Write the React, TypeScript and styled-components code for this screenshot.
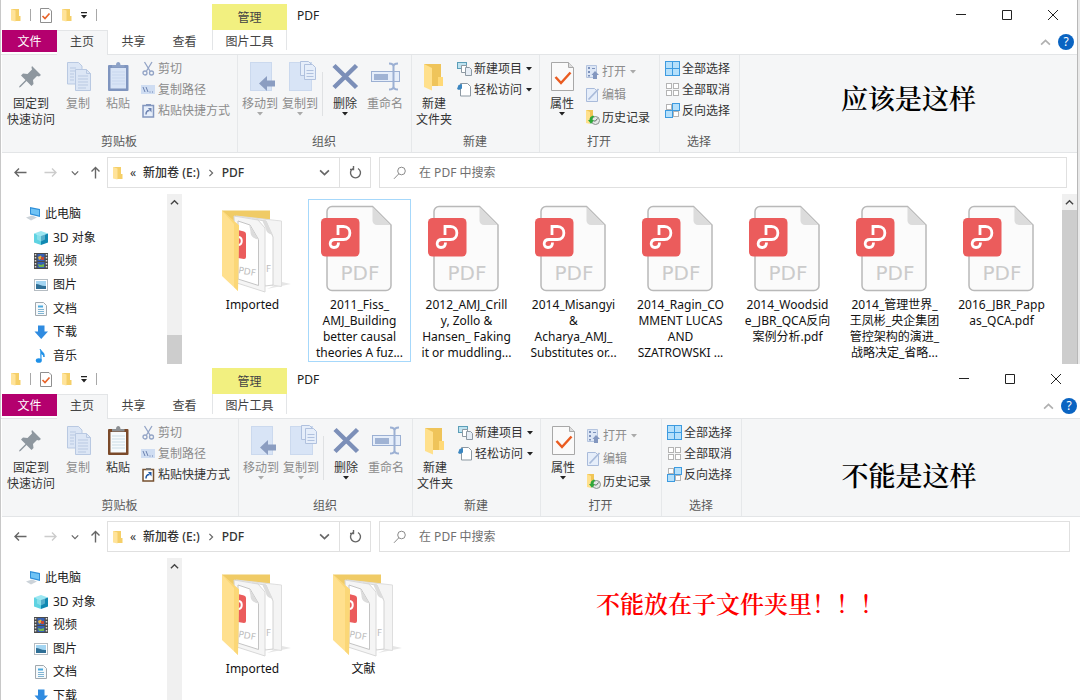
import React from "react";
import styled, { createGlobalStyle } from "styled-components";

const GlobalStyle = createGlobalStyle`
  * { box-sizing: border-box; }
  body {
    margin: 0;
    background: #fff;
    color: #222;
    font: 12px/16px "Noto Sans", "Noto Sans CJK SC", sans-serif;
  }
  button, input { font: inherit; color: inherit; }
  button { background: none; border: 0; padding: 0; cursor: pointer; }
  button:disabled { cursor: default; }
  ul { list-style: none; margin: 0; padding: 0; }
  svg { display: block; flex: none; }
`;

const Page = styled.main`
  display: flex;
  flex-direction: column;
  height: 100vh;
  min-height: 0;
  overflow: hidden;
  background: #e9e9e9;
`;

const Window = styled.section<{ $framed?: boolean }>`
  display: flex;
  flex-direction: column;
  flex: ${(p) => (p.$framed ? "none" : "1 0 auto")};
  margin-right: ${(p) => (p.$framed ? 2 : 0)}px;
  border-left: 1px solid #c8c8c8;
  border-right: ${(p) => (p.$framed ? "1px solid #b8b8b8" : "0")};
  background: #fff;
`;

/* Title bar */
const TitleBar = styled.header`
  display: flex;
  height: 30px;
`;
const QuickAccess = styled.div`
  display: flex;
  align-items: center;
  gap: 9px;
  width: 211px;
  padding-left: 9px;
`;
const Bar = styled.span`
  width: 1px;
  height: 12px;
  background: #a8a8a8;
`;
const IconButton = styled.button`
  display: flex;
  align-items: center;
  justify-content: center;
`;
const ContextTitle = styled.div`
  width: 75px;
  margin-top: 4px;
  padding-top: 6px;
  background: #f2f080;
  color: #444;
  text-align: center;
`;
const WindowTitle = styled.h1`
  flex: 1;
  margin: 0;
  padding: 8px 10px;
  font-size: 12px;
  font-weight: 400;
`;
const WindowButton = styled(IconButton)`
  width: 46px;
  height: 30px;
`;
const WindowButtons = styled.div`
  display: flex;
  padding-right: 1px;
`;

/* Tabs */
const TabBar = styled.nav`
  display: flex;
  align-items: flex-start;
  height: 25px;
  padding-left: 1px;
  border-bottom: 1px solid #e3e5e7;
`;
const Tab = styled.button<{ $kind?: "file" | "active" | "context" }>`
  display: flex;
  justify-content: center;
  width: ${(p) => (p.$kind === "file" ? 55 : p.$kind === "context" ? 75 : 51)}px;
  height: ${(p) => (p.$kind === "active" ? 25 : p.$kind === "context" ? 20 : 22)}px;
  padding-top: ${(p) => (p.$kind === "active" ? 3 : 4)}px;
  border: solid #e3e5e7;
  border-width: ${(p) =>
    p.$kind === "active" ? "1px 1px 0 0" : p.$kind === "context" ? "0 1px" : "0"};
  margin-left: ${(p) => (p.$kind === "context" ? 2 : 0)}px;
  background: ${(p) =>
    p.$kind === "file" ? "#b4006e" : p.$kind === "active" ? "#f5f6f7" : "transparent"};
  color: ${(p) => (p.$kind === "file" ? "#fff" : "#444")};
`;
const TabTools = styled.div`
  display: flex;
  align-items: center;
  gap: 7px;
  height: 24px;
  margin-left: auto;
  padding-right: 3px;
`;
const Help = styled.button`
  width: 16px;
  height: 16px;
  border-radius: 50%;
  background: #0a64c2;
  color: #fff;
  line-height: 16px;
`;

/* Ribbon */
const Ribbon = styled.div`
  display: flex;
  margin-left: 1px;
  border-bottom: 1px solid #e3e5e7;
  background: #f5f6f7;
`;
const Group = styled.section<{ $width: number }>`
  display: flex;
  flex-direction: column;
  flex: none;
  width: ${(p) => p.$width}px;
  height: 97px;
  padding: 3px 3px 2px 2px;
  border-right: 1px solid #e6e8ea;
`;
const GroupBody = styled.div`
  display: flex;
  flex: 1;
`;
const GroupName = styled.h2`
  margin: 0;
  color: #5a5a5a;
  font-size: 12px;
  font-weight: 400;
  text-align: center;
`;
const BigButton = styled.button<{ $wide?: boolean }>`
  display: flex;
  flex-direction: column;
  align-items: center;
  flex: none;
  width: ${(p) => (p.$wide ? 54 : 40)}px;
  height: 72px;
  padding-top: 2px;
  color: #333;
  white-space: nowrap;
  &:disabled { color: #8c8c8c; }
  > svg:first-child { margin-bottom: 4px; }
`;
const Divider = styled.span`
  width: 1px;
  height: 44px;
  margin: 14px 2px 0;
  background: #dfe1e3;
`;
const Stack = styled.div<{ $loose?: boolean }>`
  display: grid;
  grid-auto-rows: ${(p) => (p.$loose ? 23 : 21)}px;
  align-content: start;
  padding-top: ${(p) => (p.$loose ? 2 : 0)}px;
  padding-left: 3px;
`;
const SmallButton = styled.button`
  display: flex;
  align-items: center;
  gap: 2px;
  color: #333;
  white-space: nowrap;
  &:disabled { color: #8c8c8c; }
`;
const CaretSlot = styled.span`
  padding-left: 2px;
`;
const Note = styled.p<{ $low?: boolean }>`
  flex: 1;
  margin: 0;
  padding-top: ${(p) => (p.$low ? 42 : 29)}px;
  padding-right: ${(p) => (p.$low ? 4 : 0)}px;
  color: #000;
  font: 600 27px/32px "Liberation Serif", "Noto Serif CJK SC", "Noto Sans CJK SC", serif;
  text-align: center;
`;

/* Address row */
const AddressRow = styled.div`
  display: flex;
  align-items: center;
  padding: 4px 10px 6px 4px;
`;
const NavButtons = styled.div`
  display: flex;
  margin-right: 2px;
`;
const NavButton = styled(IconButton)<{ $narrow?: boolean }>`
  width: ${(p) => (p.$narrow ? 20 : 30)}px;
  height: 30px;
`;
const Box = styled.div`
  display: flex;
  align-items: center;
  height: 31px;
  border: 1px solid #e0e0e0;
`;
const AddressBox = styled(Box)`
  width: 264px;
  margin-right: 8px;
  padding-left: 4px;
  color: #333;
`;
const Crumbs = styled.div`
  display: flex;
  align-items: center;
  flex: 1;
  gap: 7px;
`;
const Crumb = styled.a`
  color: inherit;
  text-decoration: none;
  font-weight: 500;
`;
const Refresh = styled(IconButton)`
  width: 31px;
  height: 29px;
  margin-left: 9px;
  border-left: 1px solid #e0e0e0;
`;
const SearchBox = styled(Box)`
  flex: 1;
  gap: 12px;
  padding-left: 13px;
`;
const SearchInput = styled.input`
  flex: 1;
  min-width: 0;
  border: 0;
  padding: 0;
  outline: 0;
  background: none;
  &::placeholder { color: #6f6f6f; opacity: 1; }
`;

/* Body */
const Body = styled.div`
  display: flex;
  flex: 1;
`;
const Tree = styled.ul<{ $short: boolean }>`
  display: flex;
  flex-direction: column;
  justify-content: space-between;
  width: 166px;
  height: ${(p) => (p.$short ? 146 : 170)}px;
  padding-top: 12px;
`;
const TreeItem = styled.li<{ $root?: boolean }>`
  display: flex;
  align-items: center;
  gap: 4px;
  height: 16px;
  padding-left: ${(p) => (p.$root ? 24 : 32)}px;
`;
const Track = styled.div`
  display: flex;
  flex-direction: column;
  align-items: center;
  width: 15px;
  background: #f0f0f0;
`;
const TrackArrow = styled(IconButton)`
  width: 15px;
  height: 16px;
`;
const Thumb = styled.div<{ $short?: boolean }>`
  width: 15px;
  flex: ${(p) => (p.$short ? "0 0 29px" : "1")};
  margin-top: ${(p) => (p.$short ? "auto" : 0)};
  background: #cdcdcd;
`;
const Files = styled.ul<{ $gap: number }>`
  display: flex;
  flex: 1;
  align-items: flex-start;
  gap: ${(p) => p.$gap}px;
  padding: 5px 0 2px 19px;
`;
const File = styled.li<{ $selected?: boolean }>`
  display: flex;
  flex-direction: column;
  align-items: center;
  flex: none;
  width: 103px;
  padding: 5px 0 0;
  border: 1px solid ${(p) => (p.$selected ? "#a6d8fb" : "transparent")};
  color: #111;
  text-align: center;
  white-space: nowrap;
  > svg { margin-bottom: 4px; }
`;
const Line = styled.span`
  display: block;
`;
const Warning = styled.p`
  margin: 26px 0 0 173px;
  color: #f00;
  font: 600 24px/32px "Liberation Serif", "Noto Serif CJK SC", "Noto Sans CJK SC", serif;
`;

/* Drawings */
const Caret = ({ dim }: { dim?: boolean }) => (
  <svg width="6" height="4" viewBox="0 0 6 4" fill={dim ? "#aaa" : "#222"}>
    <path d="M0 0h6L3 3.5z" />
  </svg>
);
const FolderSmall = () => (
  <svg width="11" height="14" viewBox="0 0 11 14">
    <path d="M1 1h8v7h1.500v5H5z" fill="#f5cf68" />
    <path d="M1 1l4.500 1.500V13.500L1 12.500z" fill="#ffe39a" />
  </svg>
);
const CheckDoc = () => (
  <svg width="12" height="15" viewBox="0 0 12 15" fill="none">
    <path d="M.5.5h8.500l2.500 2.500v11.500H.5z" fill="#fff" stroke="#8f8f8f" />
    <path d="M2.500 8l2.500 2.500 4.500-5" stroke="#e8642a" strokeWidth="1.700" />
  </svg>
);
const Customize = () => (
  <svg width="6" height="7" viewBox="0 0 6 7" fill="#222">
    <path d="M0 0h6v1.200H0zM0 3h6L3 6.500z" />
  </svg>
);
const Chevron = ({ dir, color = "#666", size = 9 }: { dir: "up" | "down" | "right"; color?: string; size?: number }) => (
  <svg width={size} height={size} viewBox="0 0 10 10" fill="none" stroke={color} strokeWidth="1.500">
    <path d={dir === "up" ? "M1 7l4-4 4 4" : dir === "down" ? "M1 3l4 4 4-4" : "M3 1l4 4-4 4"} />
  </svg>
);
const Arrow = ({ dir, color = "#666" }: { dir: "left" | "right" | "up"; color?: string }) => (
  <svg width="13" height="13" viewBox="0 0 13 13" fill="none" stroke={color} strokeWidth="1.400">
    <path
      d={
        dir === "left"
          ? "M12.500 6.500H1M5 2.500l-4 4 4 4"
          : dir === "right"
            ? "M.5 6.500H12M8 2.500l4 4-4 4"
            : "M6.500 12.500V1.500M2.500 5.500l4-4 4 4"
      }
    />
  </svg>
);
const Pin = () => (
  <svg width="32" height="32" viewBox="0 0 32 32">
    <path d="M17 6l9 9-2 1.500-2-.5-4 4 .5 4-2 2-5-5-6 6-1.500.5.5-1.500 6-6-4.500-4.500 2-2 4.500.5 4.500-4.500-.5-2z" fill="#8e979f" />
  </svg>
);
const CopyPages = () => (
  <svg width="32" height="32" viewBox="0 0 32 32" fill="#dce6f5" stroke="#b9c9e2">
    <path d="M5.500 2.500h11l3.500 3.500v18H5.500z" />
    <path d="M13.500 9.500h11l4 4v17h-15z" />
    <path d="M24.500 9.500v4h4M8 8h6M8 11h5M8 14h4M8 17h4M8 20h4M16 16h10M16 19h10M16 22h10M16 25h10M16 28h8" fill="none" />
  </svg>
);
const Clipboard = ({ on }: { on?: boolean }) => (
  <svg width="32" height="32" viewBox="0 0 32 32">
    <rect x="6" y="5" width="20.500" height="26" rx="1" fill={on ? "#7b4a2a" : "#7f95bf"} />
    <rect x="8.500" y="8" width="15.500" height="20.500" fill={on ? "#f6fafc" : "#d8e4f6"} />
    <path d="M10 12h13M10 15h13M10 18h13M10 21h13M10 24h13" stroke={on ? "#ccdde6" : "#c8d7ee"} />
    <path d="M10 7.500V5h4c0-4 4.500-4 4.500 0h4v2.500z" fill={on ? "#8c8f92" : "#8da2c7"} />
  </svg>
);
const MoveTo = () => (
  <svg width="32" height="32" viewBox="0 0 32 32">
    <rect x="6.500" y="2.500" width="21" height="28" fill="#d8e4f6" stroke="#cbd9ee" />
    <path d="M15 23.500L23 16v4.500h8v6h-8V31z" fill="#8b9dc1" />
  </svg>
);
const CopyTo = () => (
  <svg width="32" height="32" viewBox="0 0 32 32" stroke="#b0c1de">
    <rect x="5.500" y="2.500" width="22" height="28" fill="#d8e4f6" stroke="#cbd9ee" />
    <path d="M16.500 1.500h8l3 3v11h-11z" fill="#e6eefa" />
    <path d="M20.500 4.500h8l3 3v12h-11z" fill="#e6eefa" />
    <path d="M22.500 10.500h7M22.500 13.500h7M22.500 16.500h7" />
  </svg>
);
const Delete = () => (
  <svg width="32" height="32" viewBox="0 0 32 32">
    <path d="M5 5.500l22.500 22M27.500 5.500L5 27.500" stroke="#7c8fb8" strokeWidth="4.500" />
  </svg>
);
const Rename = () => (
  <svg width="32" height="32" viewBox="0 0 32 32" fill="none" stroke="#9cb0d3">
    <rect x="2.500" y="11.500" width="28" height="10" fill="#e6eefa" />
    <rect x="5" y="14" width="14" height="6" fill="#a0b3d4" stroke="none" />
    <path d="M20 3.500q4.500 0 4.500 3v20q0 3-4.500 3M29 3.500q-4.500 0-4.500 3v20q0 3 4.500 3" strokeWidth="2" />
  </svg>
);
const NewFolder = () => (
  <svg width="32" height="32" viewBox="0 0 32 32">
    <path d="M6 4h17v14h1.500v8H12z" fill="#efc45a" />
    <path d="M20 17h5v9h-5z" fill="#ffd977" />
    <path d="M6 4l8 4v22.500L6 27z" fill="#ffe08c" />
  </svg>
);
const Properties = () => (
  <svg width="32" height="32" viewBox="0 0 32 32" fill="none">
    <path d="M5.500 2.500h17l5 5v23h-22z" fill="#fafafa" stroke="#a8a8a8" />
    <path d="M22.500 2.500v5h5" fill="#ddd" stroke="#a8a8a8" />
    <path d="M9.500 17l5.500 6L24.500 12.500" stroke="#ea5c21" strokeWidth="2.500" />
  </svg>
);

const small = { width: 15, height: 15, viewBox: "0 0 15 15" };
const Cut = () => (
  <svg {...small} fill="none" stroke="#93a4c6" strokeWidth="1.300">
    <path d="M3.500 1l5.500 9M11 1L5.500 10" />
    <circle cx="4" cy="12" r="2" />
    <circle cx="10.500" cy="12" r="2" />
  </svg>
);
const CopyPath = () => (
  <svg {...small}>
    <rect x="0" y="3" width="14" height="9" fill="#cfddf2" />
    <path d="M2 5l2 5M5 5l2 5M8.500 10h1M11 10h1" stroke="#6c82b0" />
  </svg>
);
const Shortcut = ({ on }: { on?: boolean }) => (
  <svg {...small} fill="none">
    <path d="M2 2.500h10.500v11.500H2z" fill={on ? "#fff" : "#e6eefa"} stroke={on ? "#76502f" : "#8397bf"} strokeWidth="1.500" />
    <path d="M5 1h5v2H5z" fill={on ? "#777" : "#8397bf"} />
    <path d="M5 11.500c0-3 1-4 3.500-4" stroke={on ? "#1d56a5" : "#6c82b0"} strokeWidth="1.500" />
    <path d="M7 5h3.500v4.500z" fill={on ? "#1d56a5" : "#6c82b0"} />
  </svg>
);
const NewItem = () => (
  <svg {...small} stroke="#8d99a3">
    <rect x=".5" y="1.500" width="9" height="6" fill="#bfe3f0" stroke="#5b9eb8" />
    <path d="M4.500 4.500h5v7h-5z" fill="#fff" />
    <path d="M8.500 6.500h4l2 2v6h-6z" fill="#e6edf5" />
  </svg>
);
const EasyAccess = () => (
  <svg {...small}>
    <path d="M3.500 1.500h7l3 3v9.500h-10z" fill="#fff" stroke="#8d99a3" />
    <path d="M0 7l1.500-4L5 2v4.500L2 8z" fill="#3b86c0" />
  </svg>
);
const Open = () => (
  <svg {...small}>
    <path d="M1.500 1.500h10v12h-10z" fill="#dce6f5" stroke="#b4c4df" />
    <path d="M3 3h2v2H3zM3 7h2v2H3zM3 11h2v1.500H3zM7 4h3v1H7z" fill="#7d92bb" />
    <path d="M10 7l4 4h-2v4H8v-4H6.500z" fill="#8397bf" />
  </svg>
);
const Edit = () => (
  <svg {...small} fill="none" stroke="#a9bbda">
    <path d="M1.500 1.500h8l3 3v10h-11z" fill="#e6eefa" />
    <path d="M3.500 12.500L13.500 2" strokeWidth="1.800" />
  </svg>
);
const History = () => (
  <svg {...small}>
    <path d="M1 0h7v12H4l-3 1z" fill="#f0c555" />
    <path d="M1 0l4 2v12l-4-1z" fill="#ffe08c" />
    <circle cx="10.500" cy="10.500" r="4" fill="#e4e8e6" stroke="#87918c" />
    <path d="M10.500 11l2-2.500M8.500 11h2" fill="none" stroke="#5c6a63" />
    <path d="M8 5.500c-3 1-3.500 3-3.500 4.500H3l3 4 3-4H7.500c0-2 .5-3 2-3.500z" fill="#2fa83a" />
  </svg>
);
const SelectGrid = ({ filled }: { filled: boolean[] }) => (
  <svg {...small}>
    {filled.map((on, i) => (
      <rect
        key={i}
        x={(i % 2) * 7 + (on ? 0.5 : 1.5)}
        y={Math.floor(i / 2) * 7 + (on ? 0.5 : 1.5)}
        width={on ? 7 : 5}
        height={on ? 7 : 5}
        fill={on ? "#b5e0fb" : "#fff"}
        stroke={on ? "#3d9be0" : "#b4b4b4"}
      />
    ))}
  </svg>
);
const RefreshIcon = () => (
  <svg width="13" height="13" viewBox="0 0 13 13" fill="none" stroke="#666" strokeWidth="1.400">
    <path d="M9 2.500a5 5 0 1 1-5 0M4.500 0v3.500H1" />
  </svg>
);
const SearchIcon = () => (
  <svg width="14" height="14" viewBox="0 0 14 14" fill="none" stroke="#8a8a8a">
    <circle cx="8.500" cy="5" r="3.800" />
    <path d="M5.800 7.800L1 12.800" />
  </svg>
);

const tree = { width: 16, height: 16, viewBox: "0 0 16 16" };
const treeItems = [
  {
    name: "此电脑",
    icon: (
      <svg {...tree}>
        <path d="M5 1l10 2v8L5 8.500z" fill="#2f8fd8" />
        <path d="M6 2.500l8 1.500v5.500L6 7.500z" fill="#6fc3f5" />
        <path d="M1 11.500l6-2 5 2-6 3z" fill="#ccd3d9" />
      </svg>
    ),
  },
  {
    name: "3D 对象",
    icon: (
      <svg {...tree}>
        <path d="M8 1l7 2.500-7 2.500-7-2.500z" fill="#9be7f2" />
        <path d="M1 3.500L8 6v9l-7-2.500z" fill="#5fd3e2" />
        <path d="M15 3.500L8 6v9l7-2.500z" fill="#1189b2" />
        <path d="M4 4.500l4 1.500 4-1.500v5l-4 2-4-2z" fill="#d3f6fa" opacity=".35" />
      </svg>
    ),
  },
  {
    name: "视频",
    icon: (
      <svg {...tree}>
        <rect x="1" y="0" width="14" height="16" fill="#4a4a4a" />
        <path d="M2.500 1v14M13.500 1v14" stroke="#ddd" strokeDasharray="1.500 1.500" strokeWidth="1.500" />
        <rect x="4.500" y="1" width="7" height="7" fill="#3560b5" />
        <rect x="4.500" y="9" width="7" height="6" fill="#3560b5" />
        <path d="M5 4l3-1.500L9 5l-3 2z" fill="#e5b13a" />
        <path d="M8 4h3v3H8z" fill="#c44a35" />
        <path d="M5 11l3 1 3-1v3H6z" fill="#75b64a" />
      </svg>
    ),
  },
  {
    name: "图片",
    icon: (
      <svg {...tree}>
        <rect x="1.500" y="2.500" width="13" height="11" fill="#fff" stroke="#b5bcc2" />
        <rect x="3" y="4" width="10" height="8" fill="#a3d5f2" />
        <path d="M3 7c3 0 6 2.500 10 2v3H3z" fill="#2f6f96" />
      </svg>
    ),
  },
  {
    name: "文档",
    icon: (
      <svg {...tree}>
        <path d="M2.500 1.500h8l3 3v10h-11z" fill="#f6f9fb" stroke="#a0a8ae" />
        <path d="M5 4.500h5v2H5z" fill="#4aa9de" />
        <path d="M5 8.500h6M5 10.500h6M5 12.500h6" stroke="#7fb4d3" />
      </svg>
    ),
  },
  {
    name: "下载",
    icon: (
      <svg {...tree}>
        <path d="M5 1.500h6.500v6H15L8.200 15 1.500 7.500H5z" fill="#2f8be0" />
      </svg>
    ),
  },
  {
    name: "音乐",
    icon: (
      <svg {...tree}>
        <path d="M7 1c1 3 5 3 4 8-.5-2-1.500-3-3-3.500V12" fill="#1e90e8" stroke="#1e90e8" />
        <ellipse cx="5.800" cy="12.500" rx="3" ry="2.300" fill="#1e90e8" />
      </svg>
    ),
  },
];

const PdfIcon = () => (
  <svg width="80" height="88" viewBox="1 0 80 88" fill="none">
    <path d="M13 1.500h40.500L72 20v60.500a5 5 0 0 1-5 5H13a5 5 0 0 1-5-5v-74a5 5 0 0 1 5-5z" fill="#fbfbfb" stroke="#b9b9b9" strokeWidth="1.500" />
    <path d="M53.500 2L71.500 20H58a4.500 4.500 0 0 1-4.500-4.500z" fill="#dcdcdc" />
    <rect x="2" y="13" width="38.500" height="38.500" rx="4.500" fill="#eb5c5c" />
    <path d="M19 30V21.500H24.500C33 21.500 33 34.500 24.500 34.500H16C10 34.500 9.500 42.500 15 42.500C19 42.500 19.500 40 19.500 37.500" stroke="#fff" strokeWidth="2.800" />
    <text x="41" y="75" fill="#cbcbcb" fontFamily="DejaVu Sans, sans-serif" fontSize="20" textAnchor="middle">PDF</text>
  </svg>
);
const FolderIcon = () => (
  <svg width="80" height="88" viewBox="1 0 80 88">
    <path d="M55 84l24-5-9-2z" fill="#e6e6e6" />
    <path d="M10 5.500h48V40H10z" fill="#f0cb66" />
    <path d="M24 11l45.500 5v65.500L53 79z" fill="#f4f4f4" stroke="#dedede" />
    <path d="M40 14l14 2 7 16v48l-8 1z" fill="#fff" stroke="#d2d2d2" />
    <path d="M50 15l4 1 7 14c-4-1-7-3-7-6z" fill="#dcdcdc" />
    <path d="M22 11l24 4 7 8v64L25 78z" fill="#f5f5f5" stroke="#d8d8d8" />
    <path d="M26 16l12 4 8.500 14.500v46L26 74z" fill="#fff" stroke="#c4c4c4" />
    <path d="M37 19l9.500 15.500c-5-1-8-3-8-8z" fill="#dcdcdc" />
    <path d="M26 25l6 1.500q2 .5 2 2.500v23q0 2-2 2l-6-1z" fill="#eb5c5c" />
    <path d="M26 32c5 0 5 8 0 8" fill="none" stroke="#fff" strokeWidth="2" />
    <text x="26" y="68" fill="#bdbdbd" fontFamily="DejaVu Sans, sans-serif" fontSize="9" transform="rotate(10 26 68)">PDF</text>
    <text x="54" y="67" fill="#bdbdbd" fontFamily="DejaVu Sans, sans-serif" fontSize="9">F</text>
    <path d="M10 5.500l17 15L26 86 10 71z" fill="#ffe08e" />
    <path d="M10 5.500l17 15L26 86l-4-4V19z" fill="#fbd777" />
  </svg>
);

type FileEntry = { lines: string[]; folder?: boolean; selected?: boolean };
type ExplorerProps = {
  files: FileEntry[];
  places: typeof treeItems;
  groupWidths: number[];
  note: string;
  warning?: string;
  framed?: boolean;
  canPaste?: boolean;
  fileGap: number;
  scrollable?: boolean;
};

const Explorer = ({ files, places, groupWidths, note, warning, framed, canPaste, fileGap, scrollable }: ExplorerProps) => (
  <Window $framed={framed}>
    <TitleBar>
      <QuickAccess>
        <FolderSmall />
        <Bar />
        <IconButton aria-label="属性"><CheckDoc /></IconButton>
        <IconButton aria-label="新建文件夹"><FolderSmall /></IconButton>
        <IconButton aria-label="自定义快速访问工具栏"><Customize /></IconButton>
        <Bar />
      </QuickAccess>
      <ContextTitle>管理</ContextTitle>
      <WindowTitle>PDF</WindowTitle>
      <WindowButtons>
        <WindowButton aria-label="最小化">
          <svg width="10" height="10" stroke="#222"><path d="M0 4.500h10" /></svg>
        </WindowButton>
        <WindowButton aria-label="最大化">
          <svg width="10" height="10" fill="none" stroke="#222"><path d="M.5.5h9v9h-9z" /></svg>
        </WindowButton>
        <WindowButton aria-label="关闭">
          <svg width="10" height="10" stroke="#222"><path d="M0 0l10 10M10 0L0 10" /></svg>
        </WindowButton>
      </WindowButtons>
    </TitleBar>
    <TabBar>
      <Tab $kind="file">文件</Tab>
      <Tab $kind="active">主页</Tab>
      <Tab>共享</Tab>
      <Tab>查看</Tab>
      <Tab $kind="context">图片工具</Tab>
      <TabTools>
        <IconButton aria-label="折叠功能区"><Chevron dir="up" color="#b0b0b0" size={11} /></IconButton>
        <Help aria-label="帮助">?</Help>
      </TabTools>
    </TabBar>
    <Ribbon>
      <Group $width={groupWidths[0]}>
        <GroupBody>
          <BigButton $wide><Pin />固定到<Line>快速访问</Line></BigButton>
          <BigButton disabled><CopyPages />复制</BigButton>
          <BigButton disabled={!canPaste}><Clipboard on={canPaste} />粘贴</BigButton>
          <Stack>
            <SmallButton disabled><Cut />剪切</SmallButton>
            <SmallButton disabled><CopyPath />复制路径</SmallButton>
            <SmallButton disabled={!canPaste}><Shortcut on={canPaste} />粘贴快捷方式</SmallButton>
          </Stack>
        </GroupBody>
        <GroupName>剪贴板</GroupName>
      </Group>
      <Group $width={groupWidths[1]}>
        <GroupBody>
          <BigButton disabled><MoveTo />移动到<Caret dim /></BigButton>
          <BigButton disabled><CopyTo />复制到<Caret dim /></BigButton>
          <Divider />
          <BigButton><Delete />删除<Caret /></BigButton>
          <BigButton disabled><Rename />重命名</BigButton>
        </GroupBody>
        <GroupName>组织</GroupName>
      </Group>
      <Group $width={groupWidths[2]}>
        <GroupBody>
          <BigButton><NewFolder />新建<Line>文件夹</Line></BigButton>
          <Stack>
            <SmallButton><NewItem />新建项目<CaretSlot><Caret /></CaretSlot></SmallButton>
            <SmallButton><EasyAccess />轻松访问<CaretSlot><Caret /></CaretSlot></SmallButton>
          </Stack>
        </GroupBody>
        <GroupName>新建</GroupName>
      </Group>
      <Group $width={groupWidths[3]}>
        <GroupBody>
          <BigButton><Properties />属性<Caret /></BigButton>
          <Stack $loose>
            <SmallButton disabled><Open />打开<CaretSlot><Caret dim /></CaretSlot></SmallButton>
            <SmallButton disabled><Edit />编辑</SmallButton>
            <SmallButton><History />历史记录</SmallButton>
          </Stack>
        </GroupBody>
        <GroupName>打开</GroupName>
      </Group>
      <Group $width={groupWidths[4]}>
        <GroupBody>
          <Stack>
            <SmallButton><SelectGrid filled={[true, true, true, true]} />全部选择</SmallButton>
            <SmallButton><SelectGrid filled={[false, false, false, false]} />全部取消</SmallButton>
            <SmallButton><SelectGrid filled={[false, true, true, false]} />反向选择</SmallButton>
          </Stack>
        </GroupBody>
        <GroupName>选择</GroupName>
      </Group>
      <Note $low={!framed}>{note}</Note>
    </Ribbon>
    <AddressRow>
      <NavButtons>
        <NavButton aria-label="后退"><Arrow dir="left" /></NavButton>
        <NavButton aria-label="前进" disabled><Arrow dir="right" color="#ccc" /></NavButton>
        <NavButton $narrow aria-label="最近浏览的位置"><Chevron dir="down" size={8} /></NavButton>
        <NavButton $narrow aria-label="上移"><Arrow dir="up" /></NavButton>
      </NavButtons>
      <AddressBox>
        <Crumbs>
          <FolderSmall />
          <span>«</span>
          <Crumb href="#">新加卷 (E:)</Crumb>
          <Chevron dir="right" size={8} />
          <Crumb href="#">PDF</Crumb>
        </Crumbs>
        <IconButton aria-label="以前的位置"><Chevron dir="down" size={11} /></IconButton>
        <Refresh aria-label="刷新"><RefreshIcon /></Refresh>
      </AddressBox>
      <SearchBox>
        <SearchIcon />
        <SearchInput type="text" aria-label="搜索" placeholder="在 PDF 中搜索" />
      </SearchBox>
    </AddressRow>
    <Body>
      <Tree $short={places.length < 7}>
        {places.map((item, i) => (
          <TreeItem key={item.name} $root={i === 0}>
            {item.icon}
            {item.name}
          </TreeItem>
        ))}
      </Tree>
      <Track>
        <TrackArrow aria-label="向上滚动"><Chevron dir="up" color="#444" /></TrackArrow>
        {scrollable && <Thumb $short />}
      </Track>
      <Files $gap={fileGap}>
        {files.map((file) => (
          <File key={file.lines[0]} $selected={file.selected}>
            {file.folder ? <FolderIcon /> : <PdfIcon />}
            {file.lines.map((line) => (
              <Line key={line}>{line}</Line>
            ))}
          </File>
        ))}
        {warning && <li><Warning>{warning}</Warning></li>}
      </Files>
      {scrollable && (
        <Track>
          <TrackArrow aria-label="向上滚动"><Chevron dir="up" color="#444" /></TrackArrow>
          <Thumb />
        </Track>
      )}
    </Body>
  </Window>
);

const libraryFiles: FileEntry[] = [
  { lines: ["Imported"], folder: true },
  { lines: ["2011_Fiss_", "AMJ_Building", "better causal", "theories A fuz..."], selected: true },
  { lines: ["2012_AMJ_Crill", "y, Zollo &", "Hansen_ Faking", "it or muddling..."] },
  { lines: ["2014_Misangyi", "&", "Acharya_AMJ_", "Substitutes or..."] },
  { lines: ["2014_Ragin_CO", "MMENT LUCAS", "AND", "SZATROWSKI ..."] },
  { lines: ["2014_Woodsid", "e_JBR_QCA反向", "案例分析.pdf"] },
  { lines: ["2014_管理世界_", "王凤彬_央企集团", "管控架构的演进_", "战略决定_省略..."] },
  { lines: ["2016_JBR_Papp", "as_QCA.pdf"] },
];
const nestedFiles: FileEntry[] = [
  { lines: ["Imported"], folder: true },
  { lines: ["文献"], folder: true },
];

export default function App() {
  return (
    <Page lang="zh-CN">
      <GlobalStyle />
      <Explorer
        files={libraryFiles}
        places={treeItems}
        groupWidths={[236, 174, 128, 120, 80]}
        note="应该是这样"
        fileGap={4}
        framed
        scrollable
      />
      <Explorer
        files={nestedFiles}
        places={treeItems.slice(0, 6)}
        groupWidths={[237, 174, 128, 121, 80]}
        note="不能是这样"
        warning="不能放在子文件夹里！！！"
        fileGap={8}
        canPaste
      />
    </Page>
  );
}
